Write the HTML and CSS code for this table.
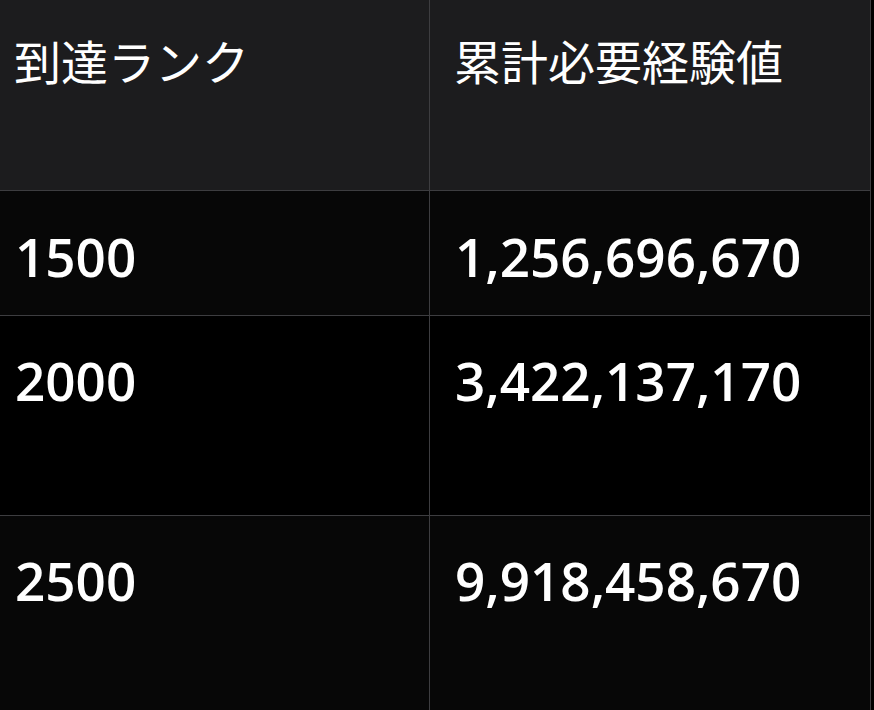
FILE: index.html
```html
<!DOCTYPE html>
<html lang="ja">
<head>
<meta charset="utf-8">
<link rel="stylesheet" href="styles.css">
</head>
<body>
<div class="table">
  <div class="cell head c1">到達ランク</div>
  <div class="cell head c2">累計必要経験値</div>
  <div class="cell num r1 c1">1500</div>
  <div class="cell num r1 c2">1,256,696,670</div>
  <div class="cell num r2 c1">2000</div>
  <div class="cell num r2 c2">3,422,137,170</div>
  <div class="cell num r3 c1">2500</div>
  <div class="cell num r3 c2">9,918,458,670</div>
</div>
</body>
</html>
```
FILE: styles.css
```css
html, body {
  margin: 0;
  padding: 0;
  background: #000;
  height: 100%;
  overflow: hidden;
}
.table {
  display: grid;
  grid-template-columns: 430px 441px;
  grid-template-rows: 191px 125px 200px 200px;
  color: #fff;
}
.cell {
  box-sizing: border-box;
  border-right: 1px solid #3d3d40;
  border-bottom: 1px solid #3d3d40;
}
.c1 { padding-left: 15px; }
.c2 { padding-left: 25px; }
.head {
  background: #1c1c1e;
  font-family: "Noto Sans CJK JP", sans-serif;
  font-size: 47px;
  font-weight: 400;
  line-height: 56px;
  padding-top: 32px;
  padding-left: 14px;
}
.head.c2 { padding-left: 24px; }
.num {
  font-family: "Open Sans", "Liberation Sans", sans-serif;
  font-weight: 600;
  font-size: 53px;
  line-height: 64px;
  padding-top: 33px;
}
.r1 { background: #070707; padding-top: 34px; }
.r2 { background: #000; }
.r3 { background: #070707; }
```
